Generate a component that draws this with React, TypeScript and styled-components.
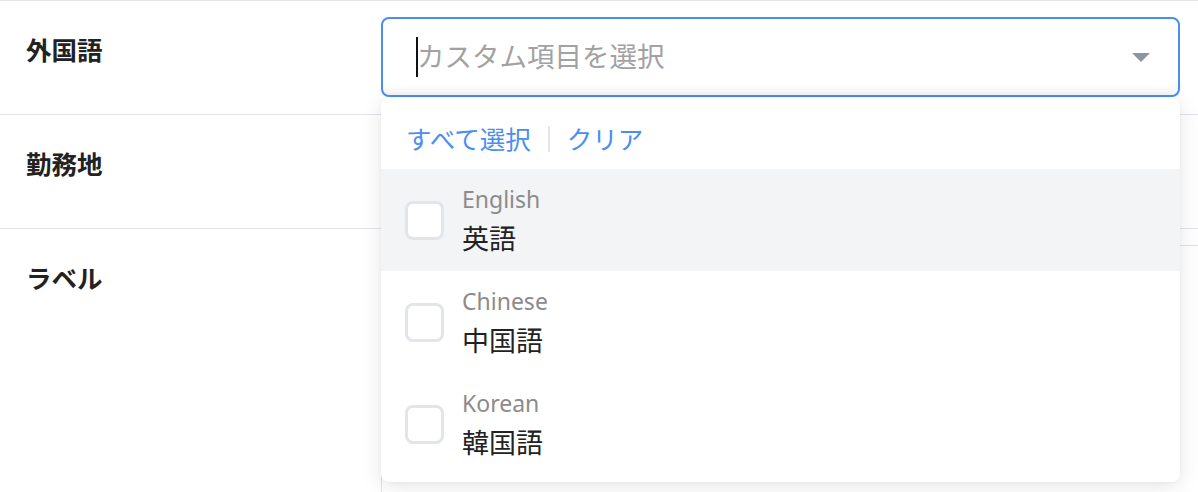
import styled, { createGlobalStyle } from "styled-components";

const GlobalStyle = createGlobalStyle`
  body {
    margin: 0;
    background: #ffffff;
    font-family: "Noto Sans", "Noto Sans CJK JP", sans-serif;
    color: #222222;
  }
`;

const Page = styled.div`
  border-top: 1px solid #e1e4e8;
  overflow: hidden;
  height: 491px;
`;

const FormRow = styled.div<{ $raised?: boolean }>`
  display: grid;
  grid-template-columns: 381px 1fr;
  padding: 16px 18px 17px 0;
  border-bottom: 1px solid #e1e4e8;
  position: relative;
  z-index: ${(p) => (p.$raised ? 2 : 1)};
`;

const Label = styled.div`
  padding: 15px 0 0 26px;
  font-size: 25.5px;
  line-height: 36px;
  font-weight: 700;
  color: #222222;
`;

const Field = styled.div`
  position: relative;
`;

const SelectBox = styled.div<{ $focused?: boolean }>`
  box-sizing: border-box;
  height: 80px;
  display: flex;
  align-items: center;
  padding: 0 28px 0 33px;
  border: 2px solid ${(p) => (p.$focused ? "#4a8ef0" : "#dfe2e6")};
  border-radius: 8px;
  background: #ffffff;
  box-shadow: inset 0 -12px 12px -10px rgba(0, 0, 0, 0.06);
`;

const Caret = styled.span`
  width: 2px;
  height: 40px;
  background: #111111;
  flex-shrink: 0;
`;

const Placeholder = styled.span`
  flex: 1;
  font-size: 27.5px;
  line-height: 40px;
  color: #a2a2a2;
  margin-left: -1px;
`;

const Arrow = styled.svg`
  width: 18px;
  height: 9px;
  flex-shrink: 0;
`;

const TextArea = styled.div`
  box-sizing: border-box;
  height: 300px;
  margin-right: -60px;
  border: 1px solid #dfe2e6;
  border-radius: 8px;
`;

const Menu = styled.div`
  position: absolute;
  top: calc(100% + 1px);
  left: 0;
  right: 0;
  background: #ffffff;
  border-radius: 8px;
  box-shadow: 0 4px 22px rgba(0, 0, 0, 0.1), 0 1px 4px rgba(0, 0, 0, 0.04);
  padding-bottom: 7px;
  z-index: 10;
`;

const MenuHeader = styled.div`
  display: flex;
  align-items: center;
  height: 71px;
  box-sizing: border-box;
  padding: 10px 24px 0 25px;
`;

const LinkButton = styled.button`
  border: none;
  background: none;
  padding: 0;
  font-family: inherit;
  font-size: 25.5px;
  line-height: 30px;
  color: #4a8ef0;
  cursor: pointer;
`;

const Divider = styled.span`
  width: 2px;
  height: 26px;
  margin: 0 17px 0 17px;
  background: #e3e6ea;
`;

const Option = styled.label<{ $active?: boolean }>`
  display: flex;
  align-items: center;
  gap: 18px;
  height: 102px;
  padding: 0 24px;
  background: ${(p) => (p.$active ? "#f3f4f6" : "#ffffff")};
  cursor: pointer;
`;

const CheckBox = styled.span`
  box-sizing: border-box;
  width: 39px;
  height: 39px;
  border: 3px solid #e2e5ea;
  border-radius: 8px;
  background: #ffffff;
  flex-shrink: 0;
`;

const OptionText = styled.div`
  display: flex;
  flex-direction: column;
  gap: 4px;
  margin-top: 2px;
`;

const OptionSub = styled.span`
  font-size: 23px;
  line-height: 32px;
  color: #8b8b8b;
`;

const OptionMain = styled.span`
  font-size: 27px;
  line-height: 40px;
  color: #222222;
`;

const languages = [
  { en: "English", ja: "英語" },
  { en: "Chinese", ja: "中国語" },
  { en: "Korean", ja: "韓国語" },
];

export default function App() {
  return (
    <>
      <GlobalStyle />
      <Page>
        <FormRow $raised>
          <Label>外国語</Label>
          <Field>
            <SelectBox $focused>
              <Caret />
              <Placeholder>カスタム項目を選択</Placeholder>
              <Arrow viewBox="0 0 18 9">
                <path d="M0 0h18L9 9z" fill="#8b95a5" />
              </Arrow>
            </SelectBox>
            <Menu>
              <MenuHeader>
                <LinkButton>すべて選択</LinkButton>
                <Divider />
                <LinkButton>クリア</LinkButton>
              </MenuHeader>
              {languages.map((l, i) => (
                <Option key={l.en} $active={i === 0}>
                  <CheckBox />
                  <OptionText>
                    <OptionSub>{l.en}</OptionSub>
                    <OptionMain>{l.ja}</OptionMain>
                  </OptionText>
                </Option>
              ))}
            </Menu>
          </Field>
        </FormRow>
        <FormRow>
          <Label>勤務地</Label>
          <Field>
            <SelectBox>
              <Placeholder>選択してください</Placeholder>
            </SelectBox>
          </Field>
        </FormRow>
        <FormRow>
          <Label>ラベル</Label>
          <Field>
            <TextArea />
          </Field>
        </FormRow>
      </Page>
    </>
  );
}
